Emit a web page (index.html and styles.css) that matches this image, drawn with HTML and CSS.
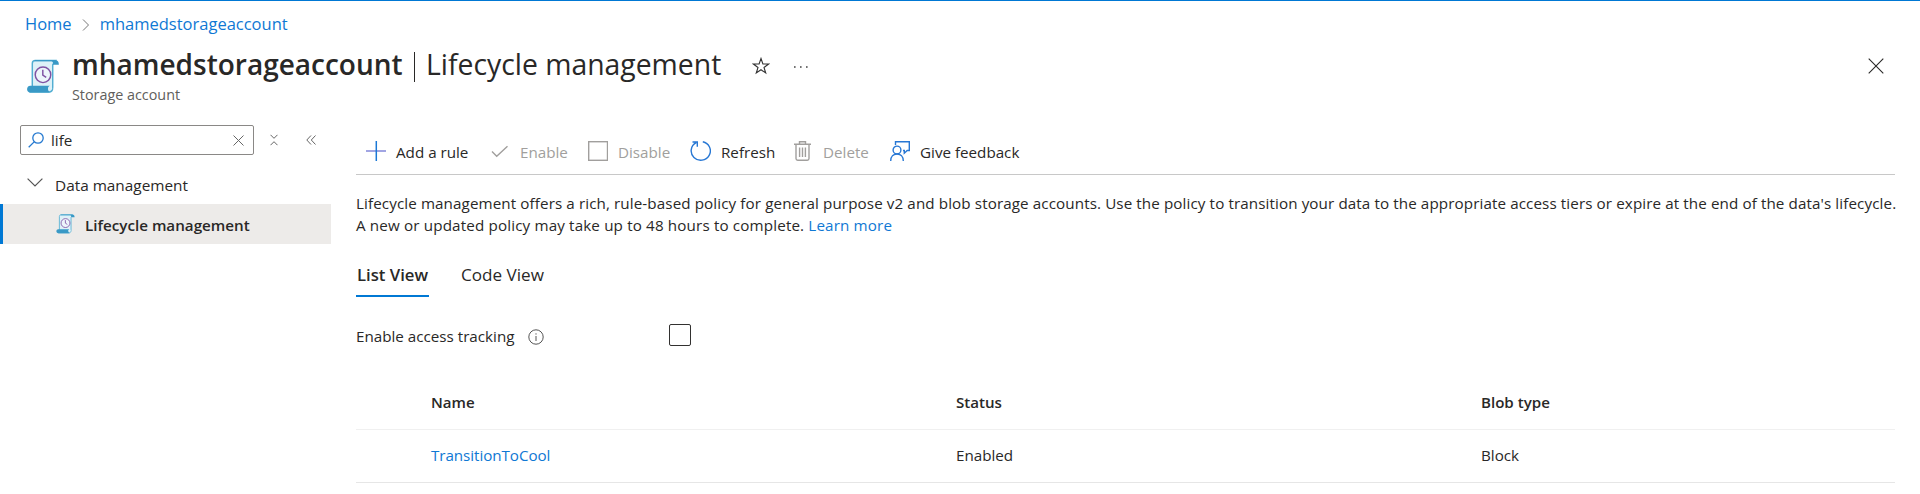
FILE: index.html
```html
<!DOCTYPE html>
<html lang="en">
<head>
<meta charset="utf-8">
<title>mhamedstorageaccount | Lifecycle management</title>
<link rel="stylesheet" href="styles.css">
</head>
<body>
<svg class="defs" width="0" height="0" aria-hidden="true">
  <symbol id="scroll" viewBox="0 0 34 36">
    <path d="M6 30V4.500C6 2.500 7 1.500 9 1.500H30L27 6V29C27 32 26 34 23 34H4Z" fill="#def1f8" stroke="#52aed2" stroke-width="1.500"/>
    <path d="M8.500 1H29C32 1 33.500 2.500 33.300 6H27.500C27.500 3.500 27 2.300 25.500 2.300H8Z" fill="#3999c6"/>
    <path d="M4 27.500H24C21.500 29 21.500 33 24.500 34.500H4C-.5 34.500-.5 27.500 4 27.500Z" fill="#3999c6"/>
    <circle cx="24.300" cy="30" r="2" fill="#def1f8"/>
    <circle cx="17" cy="16.300" r="8" fill="#edf5fb" stroke="#7f52a3" stroke-width="1.500"/>
    <path d="M16.800 11V16.500L20.300 18.800" fill="none" stroke="#7f52a3" stroke-width="1.500"/>
  </symbol>
</svg>
<header class="header">
  <nav class="crumbs">
    <a class="link">Home</a>
    <svg class="crumb-sep" width="8" height="12" viewBox="0 0 8 12"><path d="M1 .5 6.500 6 1 11.500"/></svg>
    <a class="link">mhamedstorageaccount</a>
  </nav>
  <div class="title-row">
    <svg class="title-icon" width="34" height="35"><use href="#scroll"/></svg>
    <div class="titles">
      <h1 class="title"><span class="resource">mhamedstorageaccount</span><span class="bar"></span><span class="blade">Lifecycle management</span></h1>
      <div class="subtitle">Storage account</div>
    </div>
    <svg class="star" width="18" height="18" viewBox="0 0 18 18"><path d="M9 1.500 10.900 7H16.600L12 10.500 13.700 16 9 12.700 4.300 16 6 10.500 1.400 7H7.100Z"/></svg>
    <svg class="more" width="14" height="4" viewBox="0 0 14 4"><path d="M0 1.200h1.600v1.600H0zM6 1.200h1.600v1.600H6zM12 1.200h1.600v1.600H12z"/></svg>
    <svg class="close" width="16" height="16" viewBox="0 0 16 16"><path d="M.7.7 15.300 15.300M15.300.7.7 15.300"/></svg>
  </div>
</header>
<div class="body">
  <aside class="side">
    <div class="search-row">
      <div class="search">
        <svg width="16" height="16" viewBox="0 0 16 16"><path class="stroke-blue" d="M6.400 9.600.7 15.300"/><circle class="stroke-blue" cx="10" cy="6" r="5.200"/></svg>
        <span class="query">life</span>
        <svg class="thin" width="11" height="11" viewBox="0 0 11 11"><path d="M.5.5 10.500 10.500M10.500.5.5 10.500"/></svg>
      </div>
      <svg class="thin collapse-all" width="8" height="12" viewBox="0 0 8 12"><path d="M.5.8 4 4.300 7.500.8M.5 11.200 4 7.700 7.500 11.200"/></svg>
      <svg class="thin collapse" width="10" height="10" viewBox="0 0 10 10"><path d="M5 .5.800 5 5 9.500M9.500.5 5.300 5 9.500 9.500"/></svg>
    </div>
    <div class="group">
      <svg class="chevron" width="16" height="9" viewBox="0 0 16 9"><path d="M.6.600 8 8 15.400.600"/></svg>
      <span>Data management</span>
    </div>
    <div class="item">
      <svg width="19" height="20"><use href="#scroll"/></svg>
      <span>Lifecycle management</span>
    </div>
  </aside>
  <main class="main">
    <div class="toolbar">
      <div class="cmd"><svg width="20" height="20" viewBox="0 0 20 20"><path d="M0 10H20" stroke="#8a8fdc" stroke-width="1.600"/><path d="M10.300 0V20" stroke="#1a78d6" stroke-width="1.500"/></svg><span>Add a rule</span></div>
      <div class="cmd off"><svg class="gray" width="22" height="20" viewBox="0 0 22 20"><path d="M4 10.500 8.700 15.200 19.500 5.200"/></svg><span>Enable</span></div>
      <div class="cmd off"><svg class="gray" width="20" height="20" viewBox="0 0 20 20"><rect x=".7" y=".7" width="18.800" height="18.600"/></svg><span>Disable</span></div>
      <div class="cmd"><svg class="blue" width="21" height="20" viewBox="0 0 21 20"><path d="M12.800.8A9.600 9.300 0 1 1 6.200 1.700M2.500 1H7.300V5.800"/></svg><span>Refresh</span></div>
      <div class="cmd off"><svg class="gray" width="21" height="20" viewBox="0 0 21 20"><path d="M2 3.300H19M7.500 3V.8H13.500V3M4 3.300V17.500Q4 19.200 5.700 19.200H15.300Q17 19.200 17 17.500V3.300M7.600 6.500V16M10.500 6.500V16M13.400 6.500V16"/></svg><span>Delete</span></div>
      <div class="cmd"><svg class="blue" width="20" height="20" viewBox="0 0 20 20"><path d="M5.500 4V.7H19.300V9.500H17.200L14.300 12.200V9.500H13"/><circle cx="7" cy="9" r="3.900"/><path d="M.7 20C.7 15.600 3.500 13 7 13S13.300 15.600 13.300 20"/></svg><span>Give feedback</span></div>
    </div>
    <p class="desc"><span class="line first">Lifecycle management offers a rich, rule-based policy for general purpose v2 and blob storage accounts. Use the policy to transition your data to the appropriate access tiers or expire at the end of the data's lifecycle.</span><span class="line">A new or updated policy may take up to 48 hours to complete. <a class="link">Learn more</a></span></p>
    <div class="tabs">
      <div class="tab active">List View</div>
      <div class="tab">Code View</div>
    </div>
    <div class="tracking">
      <span class="tracking-label">Enable access tracking</span>
      <svg class="info" width="16" height="16" viewBox="0 0 16 16"><circle cx="8" cy="8" r="7.200"/><path d="M8 7V12M8 4.300V5.600"/></svg>
      <span class="checkbox"></span>
    </div>
    <div class="table">
      <div class="row head"><span>Name</span><span>Status</span><span>Blob type</span></div>
      <div class="row"><a class="link">TransitionToCool</a><span>Enabled</span><span>Block</span></div>
    </div>
  </main>
</div>
</body>
</html>
```
FILE: styles.css
```css
* { box-sizing: border-box; }
body {
  margin: 0;
  height: 494px;
  overflow: hidden;
  background: #fff;
  color: #292827;
  font: 15.2px/22px "Open Sans", "Noto Sans", sans-serif;
  border-top: 1px solid #0078d4;
}
svg { flex: none; fill: none; }
.defs { display: block; height: 0; }
.link { color: #0f78d4; }
.header { height: 123px; padding-top: 11px; }
.crumbs {
  display: flex;
  align-items: center;
  height: 24px;
  padding-left: 25px;
  font-size: 16.5px;
}
.crumb-sep { margin: 1px 10px 0 10px; stroke: #777; }
.title-row { display: flex; height: 88px; padding-left: 26px; }
.title-icon { margin-top: 23px; margin-right: 12px; }
.title {
  display: flex;
  margin: 8px 0 0;
  height: 40px;
  font-size: 28.35px;
  line-height: 40px;
  font-weight: 400;
}
.resource { font-weight: 600; font-size: 28px; width: 342px; }
.bar { width: 1px; height: 30px; margin-top: 8px; margin-right: 11px; background: #292827; }
.blade { width: 326px; }
.subtitle { margin-top: 1px; font-size: 14.35px; line-height: 20px; color: #605e5c; }
.star { margin-top: 21px; stroke: #333; stroke-width: 1.1; }
.more { margin: 29px 0 0 24px; fill: #444; }
.close { margin: 22px 36px 0 auto; stroke: #292827; stroke-width: 1.1; }
.body { display: flex; }
.side { width: 331px; margin-right: 25px; flex: none; }
.search-row { display: flex; align-items: center; height: 32px; padding-left: 20px; }
.search {
  display: flex;
  align-items: center;
  width: 234px;
  height: 30px;
  padding: 0 9px 0 7px;
  border: 1px solid #8a8886;
  border-radius: 2px;
}
.stroke-blue { stroke: #2579d0; stroke-width: 1.3; }
.query { flex: 1; padding-left: 7px; }
.thin { stroke: #666; stroke-width: 1; }
.collapse-all { margin-left: 16px; }
.collapse { margin-left: 28px; }
.group { display: flex; align-items: center; height: 40px; margin-top: 8px; padding-left: 27px; font-size: 15.35px; }
.group span { padding: 2px 0 0 12px; }
.chevron { margin-bottom: 4px; stroke: #555; stroke-width: 1.2; }
.item {
  display: flex;
  align-items: center;
  height: 40px;
  padding-left: 53px;
  background: #edebe9;
  border-left: 3px solid #0078d4;
  font-weight: 600;
  font-size: 15.2px;
}
.item span { padding: 2px 0 0 10px; }
.main { flex: none; width: 1539px; }
.toolbar {
  display: grid;
  grid-template-columns: 122px 100px 102px 102px 98px 1fr;
  height: 51px;
  padding: 17px 0 0 10px;
  border-bottom: 1px solid #c8c8c8;
}
.cmd { display: flex; gap: 10px; height: 20px; line-height: 22px; }
.off { color: #a19f9d; }
.gray { stroke: #a19f9d; stroke-width: 1.4; }
.blue { stroke: #2777d4; stroke-width: 1.4; }
.desc { margin: 17px 0 0; }
.line { display: block; white-space: nowrap; letter-spacing: .15px; }
.first { letter-spacing: .104px; }
.tabs { display: flex; gap: 31px; margin-top: 24px; height: 42px; font-size: 17.1px; }
.tab { height: 37px; padding: 4px 1px 0; line-height: 22px; }
.active { font-weight: 600; font-size: 16.7px; border-bottom: 2px solid #0078d4; width: 73px; white-space: nowrap; }
.tracking { display: flex; height: 22px; margin-top: 22px; line-height: 24px; }
.tracking-label { width: 172px; }
.info { margin-top: 5px; stroke: #555; }
.checkbox {
  width: 22px;
  height: 22px;
  margin-left: 125px;
  border: 1px solid #323130;
  border-radius: 2px;
}
.table { margin-top: 31px; }
.row {
  display: grid;
  grid-template-columns: 525px 525px 1fr;
  height: 53px;
  padding: 14px 0 0 75px;
  border-bottom: 1px solid #e6e6e6;
}
.row .link { letter-spacing: -.06px; }
.head { font-weight: 600; font-size: 15.1px; border-color: #f0f0f0; }
```
